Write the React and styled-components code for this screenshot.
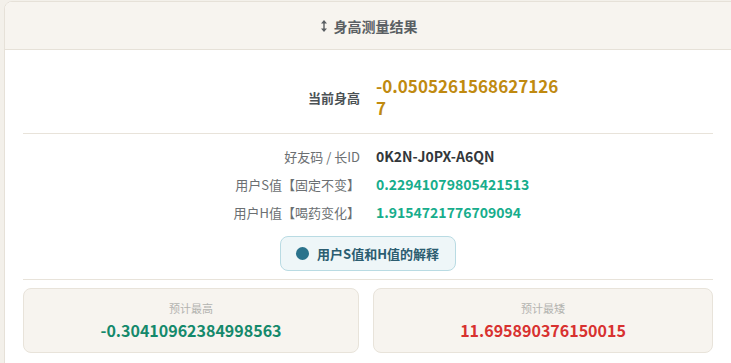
import React from 'react'
import styled, { createGlobalStyle } from 'styled-components'

const GlobalStyle = createGlobalStyle`
  html, body {
    margin: 0;
    padding: 0;
    background: #f3f0ea;
    font-family: "Noto Sans CJK SC", "Noto Sans", sans-serif;
  }
`

const Page = styled.div`
  padding: 1px 0 0 4px;
  width: 727px;
  height: 362px;
  overflow: hidden;
`

const Card = styled.div`
  background: #fff;
  border: 1px solid #e6e1d8;
  border-radius: 8px;
  overflow: hidden;
  width: 740px;
  height: 400px;
`

const Header = styled.div`
  height: 47px;
  background: #f7f4ef;
  border-bottom: 1px solid #e6e1d8;
  display: flex;
  align-items: center;
  justify-content: center;
  gap: 6px;
  width: 727px;
  font-size: 14px;
  font-weight: 700;
  color: #5a5f63;
`

const Body = styled.div`
  width: 690px;
  padding: 0 18px;
`

const Grid = styled.div`
  display: grid;
  grid-template-columns: 1fr 1fr;
  column-gap: 16px;
  align-items: center;
`

const MainRow = styled(Grid)`
  padding: 25px 0 14px;
  border-bottom: 1px solid #e8e3da;
`

const MainLabel = styled.div`
  text-align: right;
  font-size: 13px;
  font-weight: 700;
  color: #4b5155;
`

const MainValue = styled.div`
  max-width: 190px;
  word-break: break-all;
  font-size: 17px;
  line-height: 22px;
  font-weight: 700;
  color: #c08a10;
`

const InfoList = styled.div`
  padding: 8px 0 8px;
  display: flex;
  flex-direction: column;
  align-items: center;
  border-bottom: 1px solid #e8e3da;
`

const InfoRow = styled(Grid)`
  width: 100%;
  height: 28px;
`

const InfoLabel = styled.div`
  text-align: right;
  font-size: 13px;
  color: #6b6f72;
`

const InfoValue = styled.div`
  font-size: 14px;
  font-weight: 700;
  color: ${p => p.$color};
`

const ExplainButton = styled.button`
  margin-top: 10px;
  height: 35px;
  padding: 0 16px 0 15px;
  display: flex;
  align-items: center;
  gap: 8px;
  background: #eef6f8;
  border: 1px solid #b9dbe3;
  border-radius: 8px;
  font-family: inherit;
  font-size: 13px;
  font-weight: 700;
  color: #2b5d70;
`

const Dot = styled.span`
  width: 13px;
  height: 13px;
  border-radius: 50%;
  background: #2a738c;
`

const Stats = styled.div`
  display: grid;
  grid-template-columns: 336px 340px;
  gap: 14px;
  padding-top: 8px;
`

const StatBox = styled.div`
  height: 63px;
  background: #f7f4ef;
  border: 1px solid #e8e3da;
  border-radius: 8px;
  display: flex;
  flex-direction: column;
  align-items: center;
  justify-content: center;
  gap: 2px;
`

const StatLabel = styled.div`
  font-size: 11px;
  color: #b3b3b0;
`

const StatValue = styled.div`
  font-size: 16px;
  font-weight: 700;
  color: ${p => p.$color};
`

const UpDown = () => (
  <svg width="8" height="14" viewBox="0 0 8 14">
    <path d="M4 1 L7 4.5 H1 Z M4 13 L7 9.5 H1 Z" fill="#5a5f63" />
    <rect x="3.3" y="4" width="1.4" height="6" fill="#5a5f63" />
  </svg>
)

export default function App() {
  return (
    <>
      <GlobalStyle />
      <Page>
        <Card>
          <Header>
            <UpDown />
            <span>身高测量结果</span>
          </Header>
          <Body>
            <MainRow>
              <MainLabel>当前身高</MainLabel>
              <MainValue>-0.05052615686271267</MainValue>
            </MainRow>
            <InfoList>
              <InfoRow>
                <InfoLabel>好友码 / 长ID</InfoLabel>
                <InfoValue $color="#33373a">0K2N-J0PX-A6QN</InfoValue>
              </InfoRow>
              <InfoRow>
                <InfoLabel>用户S值【固定不变】</InfoLabel>
                <InfoValue $color="#17ad8c">0.22941079805421513</InfoValue>
              </InfoRow>
              <InfoRow>
                <InfoLabel>用户H值【喝药变化】</InfoLabel>
                <InfoValue $color="#17ad8c">1.9154721776709094</InfoValue>
              </InfoRow>
              <ExplainButton>
                <Dot />
                用户S值和H值的解释
              </ExplainButton>
            </InfoList>
            <Stats>
              <StatBox>
                <StatLabel>预计最高</StatLabel>
                <StatValue $color="#14896b">-0.30410962384998563</StatValue>
              </StatBox>
              <StatBox>
                <StatLabel>预计最矮</StatLabel>
                <StatValue $color="#d8312f">11.695890376150015</StatValue>
              </StatBox>
            </Stats>
          </Body>
        </Card>
      </Page>
    </>
  )
}
